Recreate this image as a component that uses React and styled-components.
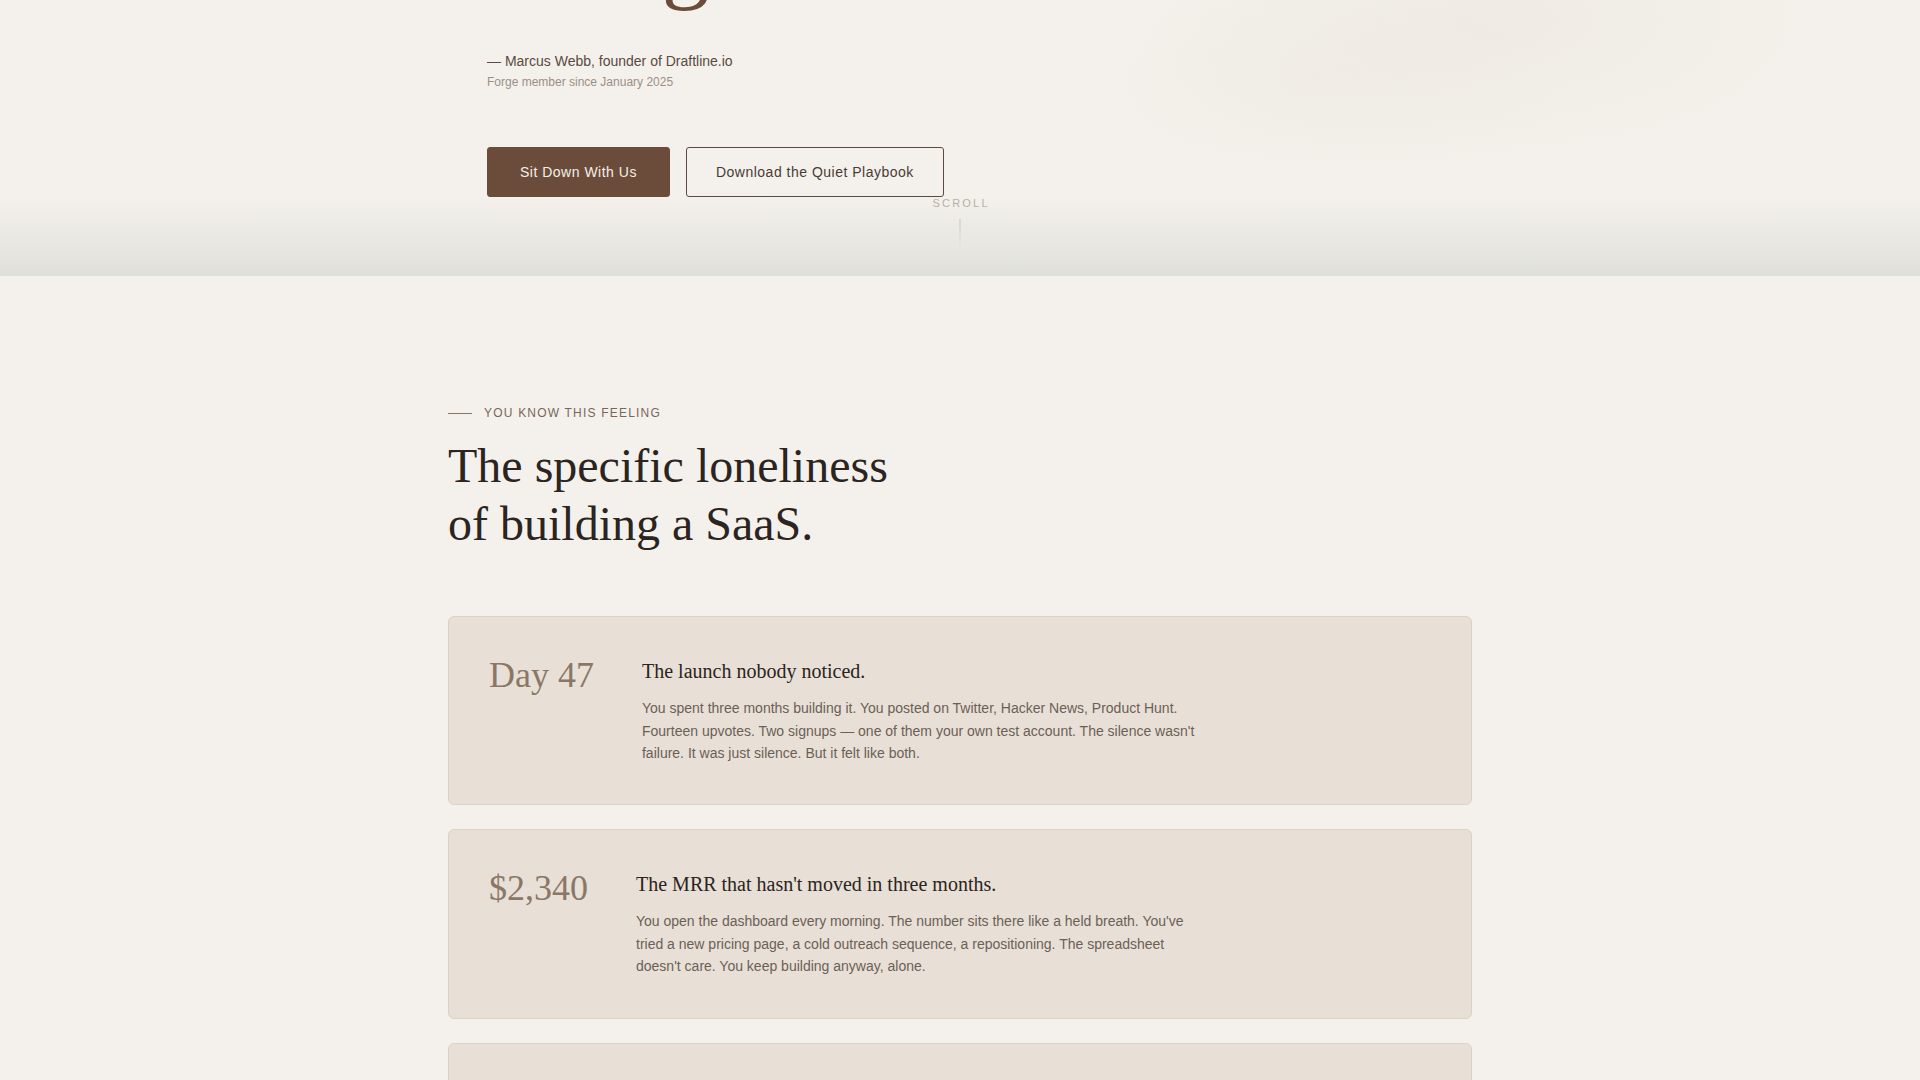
import React from "react";
import styled, { createGlobalStyle } from "styled-components";

const GlobalStyle = createGlobalStyle`
  * { box-sizing: border-box; }
  body {
    margin: 0;
    background: #f4f1ec;
    font-family: "Liberation Sans", Arial, sans-serif;
    color: #2b2420;
  }
`;

const moments = [
  {
    mark: "Day 47",
    title: "The launch nobody noticed.",
    body:
      "You spent three months building it. You posted on Twitter, Hacker News, Product Hunt. Fourteen upvotes. Two signups — one of them your own test account. The silence wasn't failure. It was just silence. But it felt like both.",
  },
  {
    mark: "$2,340",
    title: "The MRR that hasn't moved in three months.",
    body:
      "You open the dashboard every morning. The number sits there like a held breath. You've tried a new pricing page, a cold outreach sequence, a repositioning. The spreadsheet doesn't care. You keep building anyway, alone.",
  },
  {
    mark: "2:14 AM",
    title: "The decision you had to make by yourself.",
    body:
      "Rewrite the onboarding or ship the integration? Raise prices or cut churn first? There's no cofounder to argue with, no one who knows the codebase and the customers. Just you, a cold coffee, and a cursor blinking.",
  },
];

export default function App() {
  return (
    <>
      <GlobalStyle />
      <Hero>
        <HeroInner>
          <TitleTail>
            <HeroTitle>doing it alone.</HeroTitle>
          </TitleTail>
          <Attribution>— Marcus Webb, founder of Draftline.io</Attribution>
          <Since>Forge member since January 2025</Since>
          <Actions>
            <Button $primary>Sit Down With Us</Button>
            <Button>Download the Quiet Playbook</Button>
          </Actions>
        </HeroInner>
        <ScrollHint>
          <span>Scroll</span>
          <ScrollLine />
        </ScrollHint>
      </Hero>

      <Section>
        <Container>
          <Eyebrow>You know this feeling</Eyebrow>
          <Heading>
            The specific loneliness
            <br />
            of building a SaaS.
          </Heading>
          <Cards>
            {moments.map((m) => (
              <Card key={m.mark}>
                <Mark>{m.mark}</Mark>
                <CardText>
                  <CardTitle>{m.title}</CardTitle>
                  <CardBody>{m.body}</CardBody>
                </CardText>
              </Card>
            ))}
          </Cards>
        </Container>
      </Section>
    </>
  );
}

const Hero = styled.header`
  position: relative;
  padding-bottom: 79px;
  background:
    radial-gradient(ellipse 520px 220px at 78% 8%, rgba(233, 226, 216, 0.4), transparent 70%),
    radial-gradient(ellipse 380px 160px at 68% 30%, rgba(236, 231, 223, 0.35), transparent 70%),
    linear-gradient(180deg, #f4f1ec 0, #f4f1ec calc(100% - 80px), #e0e0da 100%);
`;

const HeroInner = styled.div`
  max-width: 1024px;
  margin: 0 auto;
  padding: 0 39px;
`;

const TitleTail = styled.div`
  height: 51px;
  overflow: hidden;
`;

const HeroTitle = styled.h1`
  margin: -89px 0 0 4px;
  font-family: "Liberation Serif", "Times New Roman", serif;
  font-weight: 400;
  font-size: 96px;
  line-height: 1;
  color: #6b4c3b;
  white-space: nowrap;
`;

const Attribution = styled.p`
  margin: 0;
  font-size: 14px;
  line-height: 21px;
  color: #5a4a40;
`;

const Since = styled.p`
  margin: 1px 0 0;
  font-size: 12px;
  line-height: 18px;
  color: #9a8f86;
`;

const Actions = styled.div`
  display: flex;
  gap: 16px;
  margin-top: 56px;
`;

const Button = styled.button`
  font-family: "Liberation Sans", Arial, sans-serif;
  font-size: 14px;
  line-height: 16px;
  letter-spacing: 0.5px;
  padding: 16px ${(p) => (p.$primary ? "32px" : "29px")};
  border-radius: 3px;
  border: 1px solid ${(p) => (p.$primary ? "#6b4c3b" : "#5a4a40")};
  background: ${(p) => (p.$primary ? "#6b4c3b" : "transparent")};
  color: ${(p) => (p.$primary ? "#f4efe9" : "#4a3b32")};
  cursor: pointer;
`;

const ScrollHint = styled.div`
  position: absolute;
  left: 50%;
  bottom: 28px;
  transform: translateX(-50%);
  display: flex;
  flex-direction: column;
  align-items: center;
  gap: 9px;

  span {
    font-size: 11px;
    line-height: 13px;
    letter-spacing: 0.2em;
    margin-right: -0.2em;
    text-transform: uppercase;
    color: #b5b0a8;
  }
`;

const ScrollLine = styled.div`
  width: 1px;
  height: 29px;
  background: linear-gradient(180deg, #c4c0b8, rgba(196, 192, 184, 0));
`;

const Section = styled.section`
  padding: 128px 0 120px;
`;

const Container = styled.div`
  max-width: 1024px;
  margin: 0 auto;
`;

const Eyebrow = styled.div`
  display: flex;
  align-items: center;
  gap: 12px;
  font-size: 12px;
  line-height: 18px;
  letter-spacing: 0.1em;
  text-transform: uppercase;
  color: #7a6658;

  &::before {
    content: "";
    width: 24px;
    height: 1px;
    background: #8a7565;
  }
`;

const Heading = styled.h2`
  margin: 15px 0 0;
  font-family: "Liberation Serif", "Times New Roman", serif;
  font-weight: 400;
  font-size: 48px;
  line-height: 1.2;
  color: #2b2420;
`;

const Cards = styled.div`
  display: flex;
  flex-direction: column;
  gap: 24px;
  margin-top: 64px;
`;

const Card = styled.article`
  display: flex;
  align-items: flex-start;
  gap: 48px;
  padding: 40px;
  background: #e8e0d6;
  border: 1px solid #dbd1c5;
  border-radius: 6px;
`;

const Mark = styled.div`
  font-family: "Liberation Serif", "Times New Roman", serif;
  font-size: 36px;
  line-height: 1.05;
  color: #8b7766;
  white-space: nowrap;
`;

const CardText = styled.div`
  max-width: 560px;
`;

const CardTitle = styled.h3`
  margin: 0 0 12px;
  font-family: "Liberation Serif", "Times New Roman", serif;
  font-weight: 400;
  font-size: 20px;
  line-height: 1.4;
  color: #2b2420;
`;

const CardBody = styled.p`
  margin: 0;
  font-size: 14px;
  line-height: 1.6;
  color: #6b5f56;
`;
